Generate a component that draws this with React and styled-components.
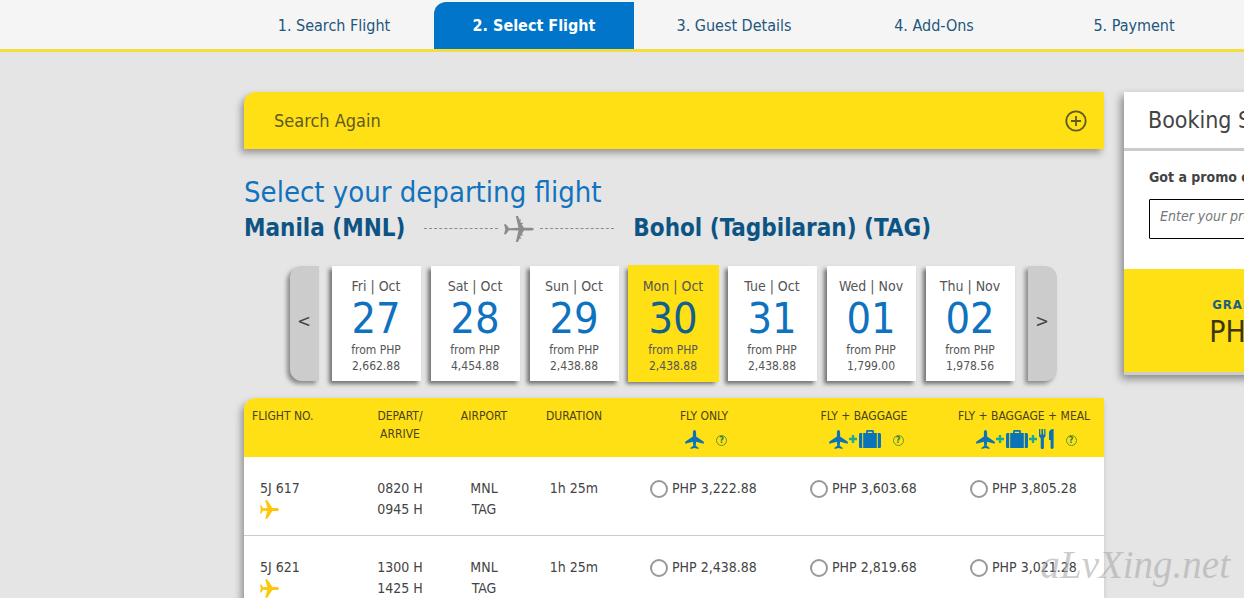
import { useState } from 'react';
import styled, { createGlobalStyle } from 'styled-components';

const steps = ['Search Flight', 'Select Flight', 'Guest Details', 'Add-Ons', 'Payment'];

const dates = [
    {label: 'Fri | Oct', day: '27', price: '2,662.88'},
    {label: 'Sat | Oct', day: '28', price: '4,454.88'},
    {label: 'Sun | Oct', day: '29', price: '2,438.88'},
    {label: 'Mon | Oct', day: '30', price: '2,438.88'},
    {label: 'Tue | Oct', day: '31', price: '2,438.88'},
    {label: 'Wed | Nov', day: '01', price: '1,799.00'},
    {label: 'Thu | Nov', day: '02', price: '1,978.56'}
];

const flights = [
    {no: '5J 617', depart: '0820 H', arrive: '0945 H', from: 'MNL', to: 'TAG', duration: '1h 25m', fares: ['3,222.88', '3,603.68', '3,805.28']},
    {no: '5J 621', depart: '1300 H', arrive: '1425 H', from: 'MNL', to: 'TAG', duration: '1h 25m', fares: ['2,438.88', '2,819.68', '3,021.28']}
];

const PlaneIcon = ({size = 19, turned}) => (
    <svg width={size} height={size} viewBox="0 0 19 19" fill="currentColor" aria-hidden="true">
        <path
            transform={turned ? 'rotate(90 9.5 9.5)' : undefined}
            d="M9.5 0c1 0 1.600 1.300 1.600 3v3.600l7.700 5.200v2l-7.700-2.100-.4 4.100 2.800 2v1.200l-4-.9-4 .9v-1.200l2.800-2-.4-4.100-7.700 2.100v-2l7.700-5.200V3c0-1.700.6-3 1.600-3z"
        />
    </svg>
);

const RoutePlaneIcon = () => (
    <svg width="30" height="26" viewBox="0 0 30 26" fill="currentColor" aria-hidden="true">
        <path d="M30 13.200c-.5-.9-2-1.400-3.500-1.400h-6.600l-2.300-3.800h1.200v-1.200h-1.900l-1-2h1.200V3.600h-1.700L14 0h-2.200l2.700 11.800-9.500.4L2 8.200H0l1.300 5L0 18.300h2l3-4 9.500.3L11.800 26H14l1.400-3.300h1.700v-1.200h-1.200l1-2h1.900v-1.200h-1.200l2.300-3.700h6.600c1.500 0 3-.5 3.500-1.400z" />
    </svg>
);

const CaseIcon = () => (
    <svg width="22" height="20" viewBox="0 0 22 20" fill="currentColor" aria-hidden="true">
        <path d="M7 4V2.500C7 1.600 7.700 1 8.500 1h5c.8 0 1.500.6 1.500 1.500V4h-1.700V2.700H8.700V4z" />
        <path d="M4.200 4h13.600v15H4.200z" />
        <path d="M3.200 4v15H1.600C.7 19 0 18.300 0 17.400V5.600C0 4.700.7 4 1.600 4zM18.800 4v15h1.600c.9 0 1.600-.7 1.600-1.600V5.600c0-.9-.7-1.600-1.600-1.600z" />
    </svg>
);

const MealIcon = () => (
    <svg width="15" height="20" viewBox="0 0 15 20" fill="currentColor" aria-hidden="true">
        <path d="M0 0h1.300v5.500h1.100V0h1.700v5.500h1.100V0h1.300v6.500c0 1.300-.6 2-1.600 2.500v9.500c0 1-.7 1.500-1.600 1.500s-1.600-.5-1.600-1.500V9C.6 8.500 0 7.800 0 6.500z" />
        <path d="M14.600 0v18.600c0 .9-.6 1.400-1.500 1.400s-1.500-.5-1.500-1.400V11H10V4C10 1.500 12 .1 14.600 0z" />
    </svg>
);

const PlusMark = () => (
    <Plus width="8" height="8" viewBox="0 0 8 8" aria-hidden="true">
        <path d="M4 0v8M0 4h8" stroke="currentColor" strokeWidth="2.400" />
    </Plus>
);

const ExpandIcon = () => (
    <svg width="22" height="22" viewBox="0 0 22 22" fill="none" stroke="currentColor" aria-hidden="true">
        <circle cx="11" cy="11" r="9.700" strokeWidth="1.800" />
        <path d="M11 6v10M6 11h10" strokeWidth="1.800" />
    </svg>
);

const fareTypes = [
    {name: 'FLY ONLY', icons: <PlaneIcon />},
    {name: 'FLY + BAGGAGE', icons: <><PlaneIcon /><PlusMark /><CaseIcon /></>},
    {name: 'FLY + BAGGAGE + MEAL', icons: <><PlaneIcon /><PlusMark /><CaseIcon /><PlusMark /><MealIcon /></>}
];

export default function App() {
    const [selected, setSelected] = useState('30');
    const [promo, setPromo] = useState('');

    return (
        <Page>
            <Global />
            <StepBar>
                {steps.map((step, i) => (
                    <Step key={step} href="#" $active={i === 1}>{i + 1}. {step}</Step>
                ))}
            </StepBar>

            <Main>
                <Content>
                    <SearchAgain type="button">
                        Search Again
                        <ExpandIcon />
                    </SearchAgain>

                    <Title>Select your departing flight</Title>
                    <Route>
                        <City>Manila (MNL)</City>
                        <Path>
                            <Dashes />
                            <RoutePlaneIcon />
                            <Dashes />
                        </Path>
                        <City>Bohol (Tagbilaran) (TAG)</City>
                    </Route>

                    <DateStrip>
                        <Arrow type="button" aria-label="Earlier dates" $side="left">&lt;</Arrow>
                        <DateList>
                            {dates.map(date => (
                                <DateCard
                                    key={date.day}
                                    type="button"
                                    onClick={() => setSelected(date.day)}
                                    $selected={date.day === selected}
                                >
                                    <Weekday>{date.label}</Weekday>
                                    <Day $selected={date.day === selected}>{date.day}</Day>
                                    <Lowest>from PHP</Lowest>
                                    <Lowest>{date.price}</Lowest>
                                </DateCard>
                            ))}
                        </DateList>
                        <Arrow type="button" aria-label="Later dates" $side="right">&gt;</Arrow>
                    </DateStrip>

                    <FlightTable>
                        <colgroup>
                            <Col $w={112} />
                            <Col $w={88} />
                            <Col $w={80} />
                            <Col $w={100} />
                            <Col $w={160} />
                            <Col $w={160} />
                            <Col $w={160} />
                        </colgroup>
                        <thead>
                            <tr>
                                <Th $left>FLIGHT NO.</Th>
                                <Th>DEPART/<br />ARRIVE</Th>
                                <Th>AIRPORT</Th>
                                <Th>DURATION</Th>
                                {fareTypes.map(type => (
                                    <Th key={type.name}>
                                        {type.name}
                                        <IconRow>
                                            {type.icons}
                                            <Help type="button" aria-label={`About ${type.name}`}>?</Help>
                                        </IconRow>
                                    </Th>
                                ))}
                            </tr>
                        </thead>
                        <tbody>
                            {flights.map(flight => (
                                <tr key={flight.no}>
                                    <Td $left>{flight.no}<Carrier><PlaneIcon turned /></Carrier></Td>
                                    <Td>{flight.depart}<br />{flight.arrive}</Td>
                                    <Td>{flight.from}<br />{flight.to}</Td>
                                    <Td>{flight.duration}</Td>
                                    {flight.fares.map(fare => (
                                        <Td key={fare}>
                                            <Fare>
                                                <Radio type="radio" name="fare" value={`${flight.no} ${fare}`} />
                                                PHP {fare}
                                            </Fare>
                                        </Td>
                                    ))}
                                </tr>
                            ))}
                        </tbody>
                    </FlightTable>
                </Content>

                <Summary>
                    <SummaryTitle>Booking Summary</SummaryTitle>
                    <Promo>
                        <PromoLabel htmlFor="promo">Got a promo code?</PromoLabel>
                        <PromoInput
                            id="promo"
                            type="text"
                            placeholder="Enter your promo code"
                            value={promo}
                            onChange={(e) => setPromo(e.target.value)}
                        />
                    </Promo>
                    <Total>
                        <TotalLabel>GRAND TOTAL</TotalLabel>
                        <Amount>PHP 0.00</Amount>
                    </Total>
                </Summary>
            </Main>
            <Watermark>aLvXing.net</Watermark>
        </Page>
    );
}

const Global = createGlobalStyle`
    * {
        box-sizing: border-box;
    }

    body {
        margin: 0;
        background: #e5e5e5;
        color: #444;
        font-family: 'DejaVu Sans Condensed', 'DejaVu Sans', sans-serif;
        font-size: 14px;
    }

    button, input {
        font-family: inherit;
        color: inherit;
    }
`;

const Page = styled.div`
    position: relative;
    height: 100vh;
    overflow: hidden;
`;

const StepBar = styled.nav`
    display: flex;
    padding: 2px 0 0 234px;
    background: #f5f5f5;
    border-bottom: 3px solid #f5de3c;
`;

const Step = styled.a`
    flex: 0 0 200px;
    height: 47px;
    line-height: 48px;
    text-align: center;
    text-decoration: none;
    font-size: 16px;
    font-weight: ${props => props.$active ? 700 : 400};
    color: ${props => props.$active ? '#fff' : '#1f567d'};
    background: ${props => props.$active ? '#0075c9' : 'none'};
    border-top-left-radius: 12px;
`;

const Main = styled.main`
    display: flex;
    align-items: flex-start;
    gap: 20px;
    padding: 40px 0 0 244px;
`;

const Content = styled.section`
    flex: 0 0 860px;
`;

const SearchAgain = styled.button`
    display: flex;
    align-items: center;
    justify-content: space-between;
    width: 100%;
    height: 57px;
    padding: 0 17px 0 30px;
    border: none;
    border-top-left-radius: 12px;
    background: #ffe014;
    color: #5f5a20;
    font-size: 18px;
    box-shadow: -3px 4px 7px rgba(0, 0, 0, 0.35);
    cursor: pointer;
`;

const Title = styled.h1`
    margin: 25px 0 0;
    font-size: 29px;
    line-height: 37px;
    font-weight: 400;
    color: #1173bd;
`;

const Route = styled.div`
    display: flex;
    align-items: center;
    gap: 19px;
    height: 33px;
`;

const City = styled.h2`
    margin: 0;
    font-size: 24px;
    line-height: 32px;
    font-weight: 700;
    color: #0d5484;
`;

const Path = styled.div`
    display: flex;
    align-items: center;
    gap: 6px;
    padding-top: 2px;
    color: #8c8c8c;
`;

const Dashes = styled.span`
    width: 74px;
    border-top: 1px dashed #8c8c8c;
`;

const DateStrip = styled.div`
    display: flex;
    justify-content: center;
    gap: 13px;
    margin-top: 22px;
    padding-right: 2px;
`;

const DateList = styled.div`
    display: flex;
    gap: 10px;
`;

const Arrow = styled.button`
    width: 29px;
    padding: 0 0 6px;
    border: none;
    border-radius: ${props => props.$side === 'left' ? '12px 0 0 12px' : '0 12px 12px 0'};
    background: #ccc;
    font-size: 18px;
    box-shadow: -3px 3px 4px rgba(0, 0, 0, 0.4);
    cursor: pointer;
`;

const DateCard = styled.button`
    display: flex;
    flex-direction: column;
    align-items: center;
    width: 89px;
    height: 115px;
    padding: 11px 0 0;
    border: none;
    background: ${props => props.$selected ? '#ffe014' : '#fff'};
    outline: ${props => props.$selected ? '1px solid #ffe014' : 'none'};
    color: #555;
    box-shadow: -3px 3px 4px rgba(0, 0, 0, 0.5);
    cursor: pointer;
`;

const Weekday = styled.span`
    font-size: 14px;
    line-height: 18px;
`;

const Day = styled.span`
    font-size: 43px;
    line-height: 47px;
    color: ${props => props.$selected ? '#12608f' : '#0f72bf'};
`;

const Lowest = styled.span`
    font-size: 12px;
    line-height: 16px;
`;

const FlightTable = styled.table`
    width: 100%;
    margin-top: 17px;
    table-layout: fixed;
    border-spacing: 0;
    border-top-left-radius: 12px;
    background: #fff;
    box-shadow: -3px 4px 7px rgba(0, 0, 0, 0.35);
`;

const Col = styled.col`
    width: ${props => props.$w}px;
`;

const Th = styled.th`
    height: 59px;
    padding: 9px 0 0 ${props => props.$left ? '8px' : '0'};
    vertical-align: top;
    text-align: ${props => props.$left ? 'left' : 'center'};
    background: #ffe014;
    font-size: 12px;
    line-height: 18px;
    font-weight: 400;
    color: #4a421a;

    &:first-child {
        border-top-left-radius: 12px;
    }
`;

const IconRow = styled.div`
    display: flex;
    align-items: center;
    justify-content: center;
    height: 20px;
    margin-top: 4px;
    padding-left: 4px;
    color: #0b73b8;
`;

const Plus = styled.svg`
    margin: 0 2px 0 1px;
    color: #19a99a;
`;

const Help = styled.button`
    width: 11px;
    height: 11px;
    margin: 2px 0 0 12px;
    padding: 0;
    border: 1px solid #5c9a2e;
    border-radius: 50%;
    background: none;
    color: #2f7d3a;
    font-size: 9px;
    font-weight: 700;
    line-height: 9px;
    cursor: pointer;
`;

const Td = styled.td`
    height: 79px;
    padding: 21px 0 0 ${props => props.$left ? '16px' : '0'};
    vertical-align: top;
    text-align: ${props => props.$left ? 'left' : 'center'};
    border-bottom: 1px solid #ccc;
    line-height: 21px;
`;

const Carrier = styled.div`
    display: flex;
    padding-top: 1px;
    color: #fdc70c;
`;

const Fare = styled.label`
    display: flex;
    align-items: center;
    gap: 4px;
    padding-left: 26px;
    cursor: pointer;
`;

const Radio = styled.input`
    appearance: none;
    width: 18px;
    height: 18px;
    margin: 0;
    border: 2px solid #999;
    border-radius: 50%;
    background: #fff;

    &:checked {
        box-shadow: inset 0 0 0 3px #fff;
        background: #0075c9;
    }
`;

const Summary = styled.aside`
    flex: 0 0 280px;
    background: #fff;
    border-bottom: 3px solid #ccc;
    box-shadow: -3px 4px 8px rgba(0, 0, 0, 0.4);
`;

const SummaryTitle = styled.h2`
    margin: 0;
    padding-left: 24px;
    border-bottom: 3px solid #ccc;
    font-size: 23px;
    line-height: 56px;
    font-weight: 400;
`;

const Promo = styled.div`
    padding: 17px 25px 30px;
`;

const PromoLabel = styled.label`
    display: block;
    font-weight: 700;
    line-height: 18px;
`;

const PromoInput = styled.input`
    display: block;
    width: 100%;
    height: 40px;
    margin-top: 13px;
    padding: 0 10px 6px;
    border: 1px solid #000;
    border-radius: 1px;
    font-size: 14px;
    font-style: italic;

    &::placeholder {
        color: #777;
    }
`;

const Total = styled.div`
    height: 103px;
    padding-top: 27px;
    background: #ffe014;
    text-align: center;
`;

const TotalLabel = styled.div`
    font-size: 13px;
    line-height: 18px;
    font-weight: 700;
    letter-spacing: 1px;
    color: #1a6180;
`;

const Amount = styled.div`
    padding-left: 12px;
    font-size: 30px;
    line-height: 36px;
    color: #3d3510;
`;

const Watermark = styled.div`
    position: absolute;
    right: 14px;
    bottom: 8px;
    font-family: 'Liberation Serif', cursive;
    font-size: 39px;
    line-height: 50px;
    font-style: italic;
    color: rgba(170, 170, 170, 0.6);
    pointer-events: none;
`;
